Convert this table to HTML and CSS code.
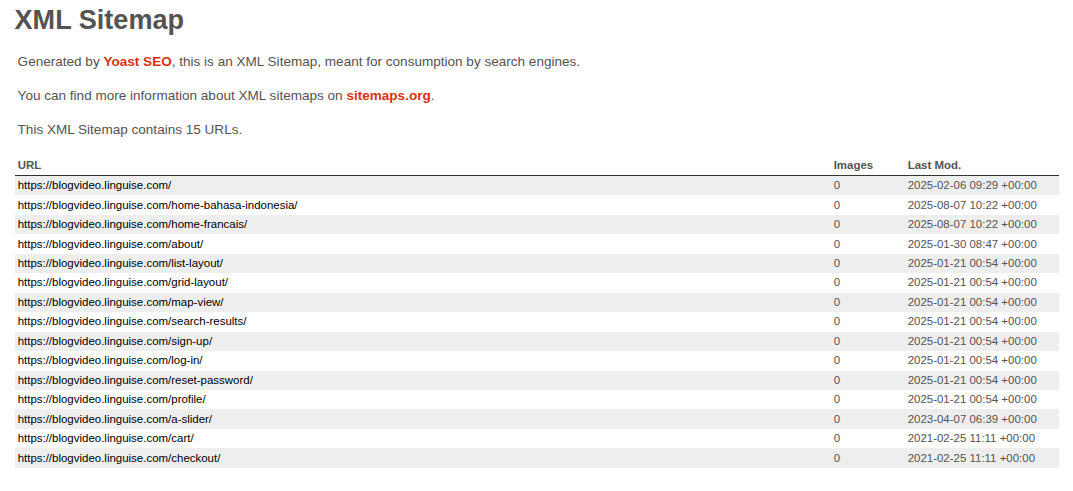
FILE: index.html
```html
<!DOCTYPE html>
<html>
<head>
<meta charset="utf-8">
<title>XML Sitemap</title>
<link rel="stylesheet" href="styles.css">
</head>
<body class="page">
<div class="content">
  <h1 class="title">XML Sitemap</h1>
  <p class="expl">Generated by <a class="expl-link" href="#">Yoast SEO</a>, this is an XML Sitemap, meant for consumption by search engines.</p>
  <p class="expl">You can find more information about XML sitemaps on <a class="expl-link" href="#">sitemaps.org</a>.</p>
  <p class="expl">This XML Sitemap contains 15 URLs.</p>
  <table class="sitemap">
    <thead>
      <tr><th class="col-url">URL</th><th class="col-img">Images</th><th class="col-mod">Last Mod.</th></tr>
    </thead>
    <tbody>
      <tr><td><a class="url" href="#">https://blogvideo.linguise.com/</a></td><td>0</td><td>2025-02-06 09:29 +00:00</td></tr>
      <tr><td><a class="url" href="#">https://blogvideo.linguise.com/home-bahasa-indonesia/</a></td><td>0</td><td>2025-08-07 10:22 +00:00</td></tr>
      <tr><td><a class="url" href="#">https://blogvideo.linguise.com/home-francais/</a></td><td>0</td><td>2025-08-07 10:22 +00:00</td></tr>
      <tr><td><a class="url" href="#">https://blogvideo.linguise.com/about/</a></td><td>0</td><td>2025-01-30 08:47 +00:00</td></tr>
      <tr><td><a class="url" href="#">https://blogvideo.linguise.com/list-layout/</a></td><td>0</td><td>2025-01-21 00:54 +00:00</td></tr>
      <tr><td><a class="url" href="#">https://blogvideo.linguise.com/grid-layout/</a></td><td>0</td><td>2025-01-21 00:54 +00:00</td></tr>
      <tr><td><a class="url" href="#">https://blogvideo.linguise.com/map-view/</a></td><td>0</td><td>2025-01-21 00:54 +00:00</td></tr>
      <tr><td><a class="url" href="#">https://blogvideo.linguise.com/search-results/</a></td><td>0</td><td>2025-01-21 00:54 +00:00</td></tr>
      <tr><td><a class="url" href="#">https://blogvideo.linguise.com/sign-up/</a></td><td>0</td><td>2025-01-21 00:54 +00:00</td></tr>
      <tr><td><a class="url" href="#">https://blogvideo.linguise.com/log-in/</a></td><td>0</td><td>2025-01-21 00:54 +00:00</td></tr>
      <tr><td><a class="url" href="#">https://blogvideo.linguise.com/reset-password/</a></td><td>0</td><td>2025-01-21 00:54 +00:00</td></tr>
      <tr><td><a class="url" href="#">https://blogvideo.linguise.com/profile/</a></td><td>0</td><td>2025-01-21 00:54 +00:00</td></tr>
      <tr><td><a class="url" href="#">https://blogvideo.linguise.com/a-slider/</a></td><td>0</td><td>2023-04-07 06:39 +00:00</td></tr>
      <tr><td><a class="url" href="#">https://blogvideo.linguise.com/cart/</a></td><td>0</td><td>2021-02-25 11:11 +00:00</td></tr>
      <tr><td><a class="url" href="#">https://blogvideo.linguise.com/checkout/</a></td><td>0</td><td>2021-02-25 11:11 +00:00</td></tr>
    </tbody>
  </table>
</div>
</body>
</html>
```
FILE: styles.css
```css
html, body {
  margin: 0;
  padding: 0;
  background: #fff;
}
.page {
  font-family: "Liberation Sans", Arial, Helvetica, sans-serif;
  font-size: 13.55px;
  color: #545353;
}
.content {
  width: 1044px;
  margin: 0 auto;
}
.title {
  font-size: 27.1px;
  font-weight: bold;
  margin: 4px 0 18px;
  line-height: normal;
}
.expl {
  margin: 17.6px 3.1px;
  line-height: 1.2em;
}
.expl-link {
  color: #da3114;
  font-weight: bold;
  text-decoration: none;
}
.sitemap {
  width: 100%;
  border: none;
  border-collapse: collapse;
}
.sitemap th {
  box-sizing: border-box;
  text-align: left;
  font-size: 11.48px;
  font-weight: bold;
  line-height: 13.2px;
  padding: 3.13px 31.3px 3.13px 3.13px;
  border-bottom: 1px solid #333;
}
.sitemap .col-img {
  width: 73px;
}
.sitemap .col-mod {
  width: 154px;
}
.sitemap td {
  font-size: 11.48px;
  line-height: 13.2px;
  padding: 3.13px;
  height: 13.2px;
  white-space: nowrap;
}
.sitemap tbody tr:nth-child(odd) td {
  background-color: #eee;
}
.url {
  color: #000;
  text-decoration: none;
}
```
